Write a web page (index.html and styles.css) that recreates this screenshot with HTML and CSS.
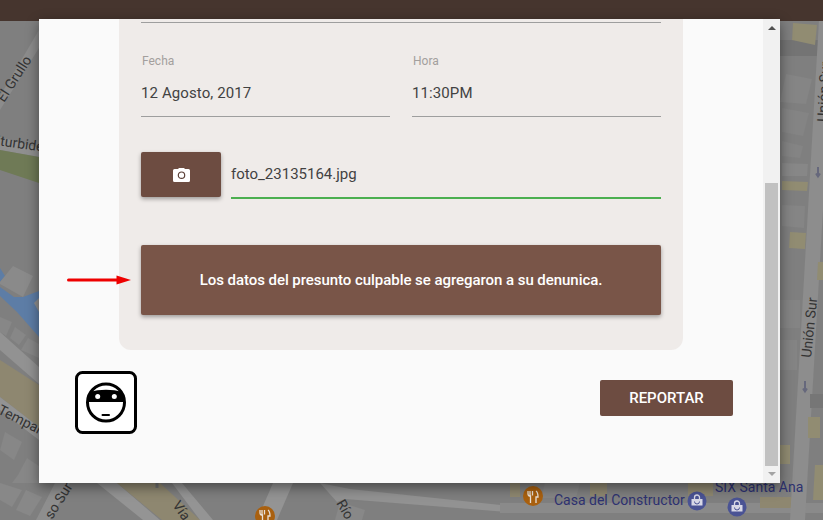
FILE: index.html
```html
<!DOCTYPE html>
<html lang="es">
<head>
<meta charset="utf-8">
<title>Denuncia</title>
<link rel="stylesheet" href="styles.css">
</head>
<body>
<svg class="map" viewBox="0 0 823 520" width="823" height="520" aria-hidden="true">
  <rect width="823" height="520" fill="#7f7f7f"/>
  <!-- left strip -->
  <polygon points="39,30 39,48 0,110 0,96" fill="#8c8c8c"/>
  <polygon points="0,137 39,148 39,157 0,150" fill="#8f8f8f"/>
  <polygon points="0,150 39,157 39,183 0,170" fill="#6f7a56"/>
  <polygon points="0,268 5,276 0,282" fill="#5d7da6"/>
  <polygon points="0,287 14,297 23,297 39,291 39,337 17,312 0,296" fill="#5d7da6"/>
  <polygon points="13,266 33,276 23,297 0,284 0,282" fill="#8a8a8a"/>
  <polygon points="34,303 39,298 39,312" fill="#8f8f8f"/>
  <polygon points="0,317 12,322 6,336 0,332" fill="#878787"/>
  <polygon points="15,327 26,335 19,345 10,338" fill="#878787"/>
  <polygon points="28,338 39,344 39,358 21,350" fill="#878787"/>
  <polygon points="0,332 39,367 39,384 0,350" fill="#929292"/>
  <polygon points="0,360 39,385 39,427 0,397" fill="#8e8770"/>
  <polygon points="0,397 39,427 39,440 0,410" fill="#939393"/>
  <polygon points="5,432 22,442 14,460 0,450" fill="#878787"/>
  <polygon points="27,458 39,466 39,483 12,483 18,475" fill="#878787"/>
  <!-- bottom strip -->
  <polygon points="0,483 22,490 12,507 0,500" fill="#888"/>
  <polygon points="26,490 42,497 30,516 16,510" fill="#888"/>
  <polygon points="55,483 70,483 50,520 36,520" fill="#8e8e8e"/>
  <polygon points="97,483 117,483 160,520 143,520" fill="#949494"/>
  <polygon points="117,483 160,483 200,520 162,520" fill="#8e8770"/>
  <polygon points="172,483 182,483 213,520 200,520" fill="#949494"/>
  <polygon points="273,483 293,483 277,520 257,520" fill="#949494"/>
  <polygon points="320,483 350,489 520,507 520,513 345,499 337,502" fill="#929292"/>
  <polygon points="340,502 365,510 362,520 335,520" fill="#888"/>
  <rect x="510" y="483" width="10" height="14" fill="#8e8770"/>
  <rect x="590" y="483" width="17" height="13" fill="#8e8770"/>
  <rect x="688" y="483" width="25" height="13" fill="#8e8770"/>
  <polygon points="545,483 580,483 576,498 541,498" fill="#858585"/>
  <rect x="500" y="503" width="323" height="10" fill="#8a8a8a"/>
  <rect x="760" y="497" width="33" height="11" fill="#8e8770"/>
  <!-- right strip -->
  <rect x="780" y="40" width="43" height="16" fill="#747474"/>
  <polygon points="793,23 817,25 815,45 792,40" fill="#918c72"/>
  <polygon points="786,74 812,79 806,104 780,102" fill="#858585"/>
  <polygon points="782,108 809,113 803,136 782,132" fill="#848484"/>
  <polygon points="782,141 803,146 800,158 782,156" fill="#848484"/>
  <polygon points="782,163 808,164 807,176 782,176" fill="#878787"/>
  <polygon points="782,181 808,182 807,191 782,190" fill="#918c72"/>
  <polygon points="782,205 805,206 804,228 782,226" fill="#858585"/>
  <polygon points="790,232 806,233 805,249 789,248" fill="#918c72"/>
  <rect x="780" y="300" width="20" height="28" fill="#848484"/>
  <rect x="780" y="340" width="17" height="30" fill="#848484"/>
  <rect x="780" y="445" width="10" height="19" fill="#918c72"/>
  <polygon points="819,20 834,20 805,520 790,520" fill="#8d8d8d"/>
  <polygon points="810,394 823,394 823,408 810,408" fill="#767676"/>
  <rect x="808" y="417" width="12" height="21" fill="#918c72"/>
  <polygon points="815,465 823,465 823,500 813,500" fill="#918c72"/>
  <polygon points="818,262 823,262 823,280 817,280" fill="#918c72"/>
  <path d="M818 167v9m-2-2.500 2 3 2-3" stroke="#66687c" stroke-width="2" fill="none"/>
  <path d="M805 381v10m-2-2.500 2 3 2-3" stroke="#66687c" stroke-width="2" fill="none"/>
  <path d="M157 480v8" stroke="#6f6f6f" stroke-width="3"/>
  <text class="m-label" transform="translate(4,103) rotate(-57)">El Grullo</text>
  <text class="m-label" transform="translate(-4,145) rotate(8)">Iturbide</text>
  <text class="m-label" transform="translate(-3,413) rotate(27)">Tempan</text>
  <text class="m-label" transform="translate(52,520) rotate(-58)">so Sur</text>
  <text class="m-label" transform="translate(172,505) rotate(55)">Vía</text>
  <text class="m-label" transform="translate(336,503) rotate(60)">Río</text>
  <text class="m-label" transform="translate(827,122) rotate(-87)">Unión Sur</text>
  <text class="m-label" transform="translate(811,358) rotate(-84)">Unión Sur</text>
  <text class="m-place" x="554" y="505">Casa del Constructor</text>
  <text class="m-place" x="715" y="492">SIX Santa Ana</text>
  <g><circle cx="533" cy="496" r="10" fill="#a9600f"/><path d="M530 491v4.500M532.500 491v4.500M528 491v3a2 2 0 0 0 2.500 2V503M536 491c1.500 1 2 3 2 6h-2v6" stroke="#e8e0d8" stroke-width="1.300" fill="none"/></g>
  <g><circle cx="265" cy="516" r="10" fill="#a9600f"/><path d="M262 510v4.500M264.500 510v4.500M260 510v3a2 2 0 0 0 2.500 2V520M268 510c1.500 1 2 3 2 6h-2v4" stroke="#e8e0d8" stroke-width="1.300" fill="none"/></g>
  <g><circle cx="697" cy="501" r="9.500" fill="#4a5394"/><path d="M691.500 499h11v6.500h-11z" fill="#d8d8e6"/><path d="M694.500 499v-1.500a2.500 2.500 0 0 1 5 0v1.500" fill="none" stroke="#d8d8e6" stroke-width="1.300"/><path d="M694.500 501.500a2.500 2.500 0 0 0 5 0" fill="none" stroke="#4a5394" stroke-width="1"/></g>
  <g><circle cx="737" cy="507" r="9.500" fill="#4a5394"/><path d="M731.500 505h11v6.500h-11z" fill="#d8d8e6"/><path d="M734.500 505v-1.500a2.500 2.500 0 0 1 5 0v1.500" fill="none" stroke="#d8d8e6" stroke-width="1.300"/><path d="M734.500 507.500a2.500 2.500 0 0 0 5 0" fill="none" stroke="#4a5394" stroke-width="1"/></g>
</svg>
<div class="appbar"></div>
<main class="modal">
  <div class="modal-scroll">
    <section class="card">
      <div class="top-rule"></div>
      <div class="row-fields">
        <div class="field">
          <label class="field-label">Fecha</label>
          <div class="field-value">12 Agosto, 2017</div>
        </div>
        <div class="field">
          <label class="field-label">Hora</label>
          <div class="field-value">11:30PM</div>
        </div>
      </div>
      <div class="row-file">
        <button class="btn-photo" type="button" aria-label="Foto">
          <svg width="17" height="14" viewBox="0 0 17 14"><path fill="#fff" d="M1.500 1H5L6 0h5l1 1h3.500A1.500 1.500 0 0 1 17 2.500v10a1.500 1.500 0 0 1-1.500 1.500h-14A1.500 1.500 0 0 1 0 12.500v-10A1.500 1.500 0 0 1 1.500 1z"/><circle cx="8.500" cy="7.200" r="3.200" fill="none" stroke="#5b4038" stroke-width="1.200"/></svg>
        </button>
        <div class="file-name">foto_23135164.jpg</div>
      </div>
      <div class="notice">Los datos del presunto culpable se agregaron a su denunica.</div>
    </section>
    <div class="actions">
      <svg class="badge" width="62" height="63" viewBox="0 0 62 63">
        <defs><clipPath id="head"><circle cx="31" cy="31.500" r="19"/></clipPath></defs>
        <rect x="1.500" y="1.500" width="59" height="60" rx="6" fill="#fff" stroke="#000" stroke-width="3"/>
        <circle cx="31" cy="31.500" r="18.500" fill="#fff" stroke="#000" stroke-width="3"/>
        <path clip-path="url(#head)" d="M14 21Q31 16.500 48 21L52 31H10z" fill="#000"/>
        <circle cx="22.700" cy="25.500" r="2.500" fill="#fff"/>
        <circle cx="39.300" cy="25.500" r="2.500" fill="#fff"/>
        <rect x="26.500" y="43" width="8.500" height="2" rx="1" fill="#000"/>
      </svg>
      <button class="btn-report" type="button">REPORTAR</button>
    </div>
  </div>
  <div class="scrollbar">
    <span class="sb-arrow sb-up"></span>
    <div class="sb-track"><div class="sb-thumb"></div></div>
    <span class="sb-arrow sb-down"></span>
  </div>
</main>
<svg class="arrow" width="68" height="12" viewBox="0 0 68 12" aria-hidden="true">
  <path d="M2.500 6h50" stroke="#ee0000" stroke-width="3" stroke-linecap="round"/>
  <polygon points="50.500,1.500 65,6 50.500,10.500" fill="#ee0000"/>
</svg>
</body>
</html>
```

FILE: styles.css
```css
* { box-sizing: border-box; }
html, body { margin: 0; height: 100%; }
body {
  position: relative;
  width: 823px;
  height: 520px;
  overflow: hidden;
  font-family: Roboto, "Liberation Sans", sans-serif;
  background: #7f7f7f;
}
.map { position: absolute; left: 0; top: 0; }
.m-label { font: 14px Roboto, sans-serif; fill: #333; }
.m-place { font: 14px Roboto, sans-serif; fill: #2d3170; }
.appbar {
  position: absolute;
  left: 0; top: 0;
  width: 823px;
  height: 21px;
  background: #46352e;
}
.modal {
  position: absolute;
  left: 39px; top: 19px;
  width: 741px;
  height: 464px;
  display: flex;
  background: #fafafa;
  box-shadow: 0 4px 12px rgba(0,0,0,.45);
  overflow: hidden;
}
.modal-scroll { flex: 1; min-width: 0; }
.card {
  width: 564px;
  height: 331px;
  margin-left: 80px;
  padding: 3px 22px 0;
  background: #efebe9;
  border-radius: 0 0 12px 12px;
}
.top-rule { height: 1px; background: #9e9e9e; }
.row-fields { display: flex; gap: 22px; margin-top: 31px; }
.field { flex: 1; height: 63px; border-bottom: 1px solid #9e9e9e; }
.field-label { display: block; padding-left: 1px; font-size: 12px; line-height: 14px; color: #a39f9d; }
.field-value { margin-top: 16px; font-size: 15px; line-height: 18px; color: #424242; letter-spacing: .1px; }
.row-file { display: flex; gap: 10px; margin-top: 35px; }
.btn-photo {
  width: 80px; height: 45px;
  border: 0; border-radius: 2px;
  background: #6d4c41;
  box-shadow: 0 2px 4px rgba(0,0,0,.35);
  display: flex; align-items: center; justify-content: center;
  padding: 0;
}
.file-name {
  flex: 1;
  height: 47px;
  padding-top: 13px;
  font-size: 15px;
  line-height: 18px;
  color: #424242;
  border-bottom: 2px solid #4caf50;
}
.notice {
  margin-top: 46px;
  height: 70px;
  display: flex; align-items: center; justify-content: center;
  background: #795548;
  border-radius: 2px;
  color: #fff;
  font-size: 15px;
  font-weight: 500;
  letter-spacing: -.05px;
  box-shadow: 0 2px 4px rgba(0,0,0,.35);
}
.actions {
  display: flex;
  justify-content: space-between;
  align-items: flex-start;
  padding: 21px 30px 0 36px;
}
.btn-report {
  margin-top: 9px;
  width: 133px; height: 36px;
  border: 0; border-radius: 2px;
  background: #6d4c41;
  color: #fff;
  font: 500 15px/36px Roboto, sans-serif;
  padding: 0;
}
.scrollbar {
  width: 17px;
  flex: none;
  background: #f1f1f1;
  display: flex;
  flex-direction: column;
  align-items: center;
}
.sb-track { flex: 1; width: 100%; padding: 147px 2px 0 2px; display: flex; }
.sb-thumb { flex: 1; background: #c1c1c1; }
.sb-arrow { flex: none; width: 0; height: 0; border-left: 4px solid transparent; border-right: 4px solid transparent; }
.sb-up { border-bottom: 4px solid #505050; margin: 7px 0 6px; }
.sb-down { border-top: 4px solid #a3a3a3; margin: 6px 0 7px; }
.arrow { position: absolute; left: 66px; top: 274px; }
```
